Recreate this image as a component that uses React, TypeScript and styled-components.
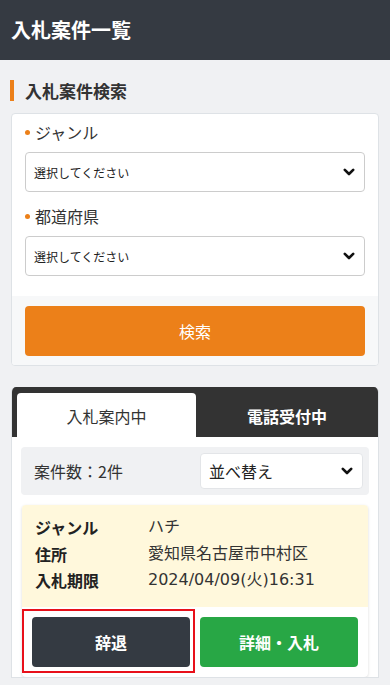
import React from "react";
import styled, { createGlobalStyle } from "styled-components";

const Global = createGlobalStyle`
  html, body { margin: 0; padding: 0; }
  body {
    background: #f0f1f3;
    font-family: "Noto Sans", "Noto Sans CJK JP", sans-serif;
    color: #333;
  }
  * { box-sizing: border-box; }
`;

const Page = styled.div`
  width: 390px;
  height: 685px;
  overflow: hidden;
  background: #f0f1f3;
`;

const Header = styled.header`
  height: 60px;
  background: #353a42;
  display: flex;
  align-items: center;
  padding: 0 11px;
`;

const HeaderTitle = styled.h1`
  margin: 0;
  color: #fff;
  font-size: 20px;
  font-weight: 700;
  font-family: "Noto Sans CJK JP", sans-serif;
  line-height: 1;
`;

const Main = styled.main`
  padding: 20px 11px 0;
`;

const SectionTitle = styled.h2`
  margin: 0 0 12px -1px;
  border-left: 4px solid #ec8019;
  padding-left: 11px;
  height: 21px;
  display: flex;
  align-items: center;
  font-size: 17px;
  font-weight: 700;
  color: #333;
  font-family: "Noto Sans CJK JP", sans-serif;
`;

const Card = styled.section`
  background: #fff;
  border: 1px solid #dee2e6;
  border-radius: 4px;
  overflow: hidden;
`;

const CardBody = styled.div`
  padding: 5px 13px 20px;
  display: flex;
  flex-direction: column;
`;

const Label = styled.div`
  display: flex;
  align-items: center;
  gap: 5px;
  font-size: 16px;
  line-height: 26px;
  color: #333;
  font-family: "Noto Sans CJK JP", sans-serif;
  margin-bottom: 7px;
  &::before {
    content: "";
    width: 5px;
    height: 5px;
    border-radius: 50%;
    background: #ec8019;
  }
`;

const SelectBox = styled.div<{ $height: number; $size: number; $border: string }>`
  height: ${(p) => p.$height}px;
  border: 1px solid ${(p) => p.$border};
  border-radius: 4px;
  background: #fff;
  display: flex;
  align-items: center;
  justify-content: space-between;
  padding: 0 9px 0 8px;
  font-size: ${(p) => p.$size}px;
  color: #222;
  font-family: "Noto Sans CJK JP", sans-serif;
`;

const FieldGap = styled.div`
  height: 11px;
`;

const CardFooter = styled.div`
  background: #f7f8f9;
  padding: 10px 13px 9px;
`;

const SearchButton = styled.button`
  width: 100%;
  height: 50px;
  border: none;
  border-radius: 4px;
  background: #ec8019;
  color: #fff;
  font-size: 16px;
  font-family: "Noto Sans CJK JP", sans-serif;
`;

const ListCard = styled.section`
  margin-top: 21px;
  background: #fff;
  border-radius: 5px 5px 0 0;
  border: 1px solid #dee2e6;
  border-top: none;
  overflow: hidden;
`;

const Tabs = styled.div`
  background: #333;
  padding: 6px 0 0 5px;
  display: flex;
  height: 50px;
`;

const Tab = styled.div<{ $active?: boolean }>`
  flex: ${(p) => (p.$active ? "0 0 179px" : "1")};
  display: flex;
  align-items: center;
  justify-content: center;
  border-radius: 4px 4px 0 0;
  background: ${(p) => (p.$active ? "#fff" : "transparent")};
  color: ${(p) => (p.$active ? "#333" : "#fff")};
  font-weight: ${(p) => (p.$active ? 400 : 700)};
  font-size: 16px;
  font-family: "Noto Sans CJK JP", sans-serif;
  padding-top: 1px;
`;

const ListBody = styled.div`
  padding: 10px 9px 0;
  display: flex;
  flex-direction: column;
  gap: 10px;
`;

const Toolbar = styled.div`
  height: 48px;
  background: #f0f1f3;
  border-radius: 4px;
  display: flex;
  align-items: center;
  justify-content: space-between;
  padding: 0 6px 0 13px;
`;

const Count = styled.span`
  font-size: 16px;
  font-family: "Noto Sans CJK JP", sans-serif;
  color: #333;
`;

const SortWrap = styled.div`
  width: 163px;
`;

const Item = styled.article`
  margin: 0 1px;
  background: #fff;
  border-radius: 4px;
  box-shadow: 0 1px 3px rgba(0, 0, 0, 0.15);
  overflow: hidden;
`;

const ItemInfo = styled.dl`
  margin: 0;
  background: #fff8dc;
  padding: 9px 13px 13px;
  display: grid;
  grid-template-columns: 113px 1fr;
  row-gap: 0;
  font-family: "Noto Sans CJK JP", sans-serif;
  font-size: 16px;
  line-height: 26.5px;
`;

const Term = styled.dt`
  font-weight: 700;
  color: #222;
`;

const Desc = styled.dd`
  margin: 0;
  color: #333;
  font-family: "DejaVu Sans", "Noto Sans CJK JP", sans-serif;
`;

const Actions = styled.div`
  display: grid;
  grid-template-columns: 1fr 1fr;
  gap: 10px;
  padding: 10px;
`;

const ActionButton = styled.button<{ $variant: "dark" | "green" }>`
  position: relative;
  height: 50px;
  border: none;
  border-radius: 4px;
  background: ${(p) => (p.$variant === "dark" ? "#343a42" : "#28a745")};
  color: #fff;
  font-weight: 700;
  font-size: 16px;
  font-family: "Noto Sans CJK JP", sans-serif;
`;

const Highlight = styled.span`
  position: absolute;
  left: -10px;
  right: -5px;
  top: -8px;
  bottom: -6px;
  border: 2px solid #e8101a;
  pointer-events: none;
`;

const Chevron = () => (
  <svg width="12" height="8" viewBox="0 0 12 8" aria-hidden>
    <path d="M1.8 1.8 L6 6 L10.2 1.8" fill="none" stroke="#111" strokeWidth="2.6" strokeLinecap="round" strokeLinejoin="round" />
  </svg>
);

export default function App() {
  return (
    <Page>
      <Global />
      <Header>
        <HeaderTitle>入札案件一覧</HeaderTitle>
      </Header>
      <Main>
        <SectionTitle>入札案件検索</SectionTitle>
        <Card>
          <CardBody>
            <Label>ジャンル</Label>
            <SelectBox $height={40} $size={12} $border="#ccc">
              選択してください
              <Chevron />
            </SelectBox>
            <FieldGap />
            <Label>都道府県</Label>
            <SelectBox $height={40} $size={12} $border="#ccc">
              選択してください
              <Chevron />
            </SelectBox>
          </CardBody>
          <CardFooter>
            <SearchButton>検索</SearchButton>
          </CardFooter>
        </Card>

        <ListCard>
          <Tabs>
            <Tab $active>入札案内中</Tab>
            <Tab>電話受付中</Tab>
          </Tabs>
          <ListBody>
            <Toolbar>
              <Count>案件数：2件</Count>
              <SortWrap>
                <SelectBox $height={36} $size={16} $border="#e3e5e8">
                  並べ替え
                  <Chevron />
                </SelectBox>
              </SortWrap>
            </Toolbar>
            <Item>
              <ItemInfo>
                <Term>ジャンル</Term>
                <Desc>ハチ</Desc>
                <Term>住所</Term>
                <Desc>愛知県名古屋市中村区</Desc>
                <Term>入札期限</Term>
                <Desc>2024/04/09(火)16:31</Desc>
              </ItemInfo>
              <Actions>
                <ActionButton $variant="dark">
                  辞退
                  <Highlight />
                </ActionButton>
                <ActionButton $variant="green">詳細・入札</ActionButton>
              </Actions>
            </Item>
          </ListBody>
        </ListCard>
      </Main>
    </Page>
  );
}
